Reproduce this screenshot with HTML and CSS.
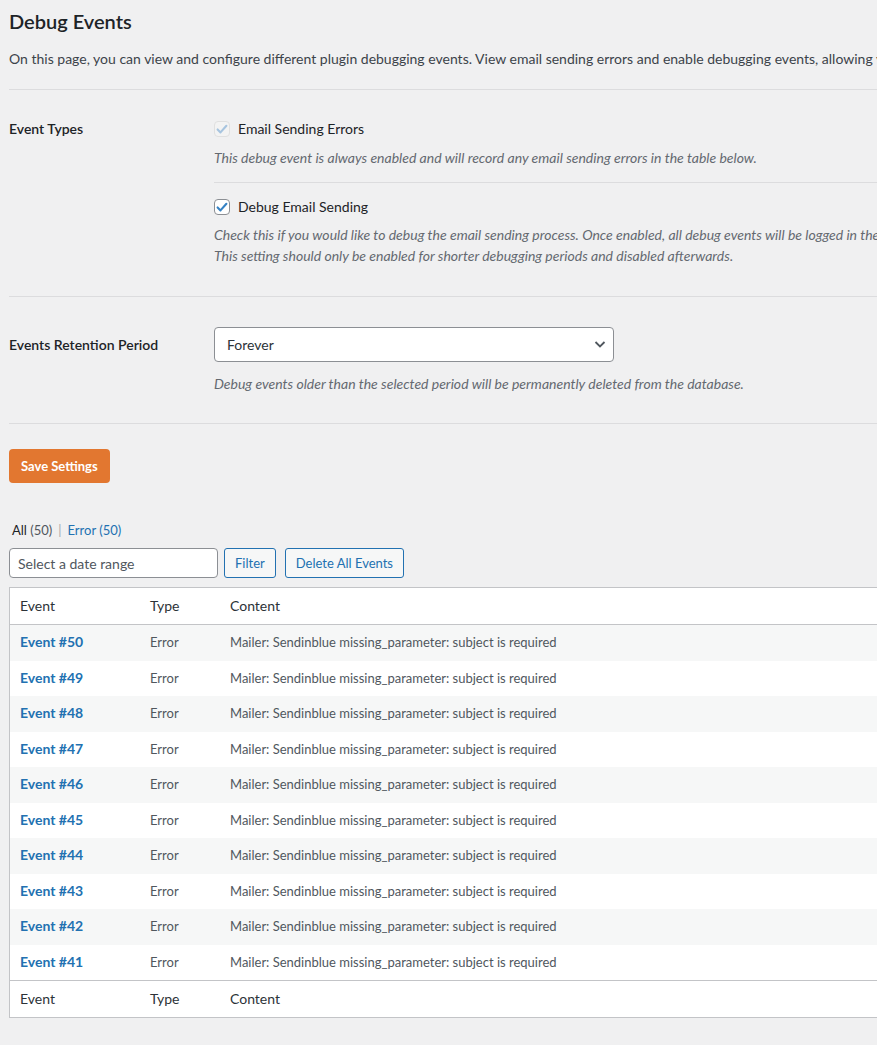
FILE: index.html
```html
<!DOCTYPE html>
<html lang="en">

<head>
    <meta charset="UTF-8">
    <meta name="viewport" content="width=device-width, initial-scale=1.0">
    <title>Debug Events</title>
    <link rel="stylesheet" href="styles.css">
</head>

<body>
    <div class="wrap">
        <h1 class="page-title">Debug Events</h1>
        <p class="intro">On this page, you can view and configure different plugin debugging events. View email sending errors and enable debugging events, allowing you to detect email sending issues.</p>

        <div class="settings">
            <div class="setting-row">
                <div class="setting-label">Event Types</div>
                <div class="setting-field">
                    <div class="option">
                        <label class="check-line">
                            <span class="checkbox disabled">
                                <svg viewBox="0 0 16 16" width="16" height="16"><path d="M3.6 8.4l2.9 3 5.9-6.6" fill="none" stroke="currentColor" stroke-width="2.1" stroke-linecap="round" stroke-linejoin="round"/></svg>
                            </span>
                            Email Sending Errors
                        </label>
                        <p class="desc">This debug event is always enabled and will record any email sending errors in the table below.</p>
                    </div>
                    <div class="option">
                        <label class="check-line">
                            <span class="checkbox">
                                <svg viewBox="0 0 16 16" width="16" height="16"><path d="M3.6 8.4l2.9 3 5.9-6.6" fill="none" stroke="currentColor" stroke-width="2.1" stroke-linecap="round" stroke-linejoin="round"/></svg>
                            </span>
                            Debug Email Sending
                        </label>
                        <p class="desc">Check this if you would like to debug the email sending process. Once enabled, all debug events will be logged in the table below.<br>This setting should only be enabled for shorter debugging periods and disabled afterwards.</p>
                    </div>
                </div>
            </div>

            <div class="setting-row">
                <div class="setting-label centered">Events Retention Period</div>
                <div class="setting-field">
                    <div class="select-box">
                        <select class="select">
                            <option>Forever</option>
                        </select>
                        <svg class="chevron" viewBox="0 0 16 16" width="16" height="16"><path d="M3.5 6l4.5 4.5 4.5-4.5" fill="none" stroke="#50575e" stroke-width="1.8"/></svg>
                    </div>
                    <p class="desc">Debug events older than the selected period will be permanently deleted from the database.</p>
                </div>
            </div>
        </div>

        <button class="btn-save">Save Settings</button>

        <ul class="views">
            <li class="current">All <span class="count">(50)</span></li>
            <li class="sep">|</li>
            <li><a href="#">Error <span>(50)</span></a></li>
        </ul>

        <div class="filters">
            <input class="date-input" type="text" placeholder="Select a date range">
            <button class="btn-outline">Filter</button>
            <button class="btn-outline delete">Delete All Events</button>
        </div>

        <table class="events">
            <thead>
                <tr><th class="col-event">Event</th><th class="col-type">Type</th><th>Content</th></tr>
            </thead>
            <tbody>
                <tr><td><a href="#">Event #50</a></td><td>Error</td><td>Mailer: Sendinblue missing_parameter: subject is required</td></tr>
                <tr><td><a href="#">Event #49</a></td><td>Error</td><td>Mailer: Sendinblue missing_parameter: subject is required</td></tr>
                <tr><td><a href="#">Event #48</a></td><td>Error</td><td>Mailer: Sendinblue missing_parameter: subject is required</td></tr>
                <tr><td><a href="#">Event #47</a></td><td>Error</td><td>Mailer: Sendinblue missing_parameter: subject is required</td></tr>
                <tr><td><a href="#">Event #46</a></td><td>Error</td><td>Mailer: Sendinblue missing_parameter: subject is required</td></tr>
                <tr><td><a href="#">Event #45</a></td><td>Error</td><td>Mailer: Sendinblue missing_parameter: subject is required</td></tr>
                <tr><td><a href="#">Event #44</a></td><td>Error</td><td>Mailer: Sendinblue missing_parameter: subject is required</td></tr>
                <tr><td><a href="#">Event #43</a></td><td>Error</td><td>Mailer: Sendinblue missing_parameter: subject is required</td></tr>
                <tr><td><a href="#">Event #42</a></td><td>Error</td><td>Mailer: Sendinblue missing_parameter: subject is required</td></tr>
                <tr><td><a href="#">Event #41</a></td><td>Error</td><td>Mailer: Sendinblue missing_parameter: subject is required</td></tr>
            </tbody>
            <tfoot>
                <tr><th>Event</th><th>Type</th><th>Content</th></tr>
            </tfoot>
        </table>
    </div>
</body>

</html>
```

FILE: styles.css
```css
html,
body {
    overflow: hidden;
}

body {
    margin: 0;
    background: #f0f0f1;
    color: #3c434a;
    font-family: Lato, "Noto Sans", sans-serif;
    font-size: 14px;
}

.wrap {
    width: 1200px;
    padding-left: 9px;
}

.page-title {
    margin: 8px 0 0;
    font-size: 20px;
    line-height: 26px;
    font-weight: 600;
    color: #1d2327;
}

.intro {
    margin: 14px 0 0;
    line-height: 21px;
    white-space: nowrap;
}

.settings {
    margin-top: 20px;
    border-bottom: 1px solid #dcdcde;
}

.setting-row {
    display: grid;
    grid-template-columns: 205px 1fr;
    border-top: 1px solid #dcdcde;
    padding: 29px 0 30px;
}

.setting-row + .setting-row {
    padding: 30px 0 29px;
}

.setting-label {
    font-weight: 600;
    color: #1d2327;
    line-height: 20px;
}

.setting-label.centered {
    line-height: 35px;
}

.option + .option {
    margin-top: 14px;
    padding-top: 14px;
    border-top: 1px solid #dcdcde;
}

.check-line {
    display: flex;
    align-items: center;
    gap: 8px;
    line-height: 20px;
    color: #1d2327;
}

.checkbox {
    width: 16px;
    height: 16px;
    box-sizing: border-box;
    border: 1px solid #8c8f94;
    border-radius: 4px;
    background: #fff;
    color: #3582c4;
    display: flex;
}

.checkbox svg {
    margin: -1px;
}

.checkbox.disabled {
    border-color: #e0e0e0;
    background: #f3f3f3;
    color: #a7c4df;
}

.desc {
    margin: 7.5px 0 0;
    line-height: 21px;
    font-style: italic;
    color: #646970;
    white-space: nowrap;
}

.select-box {
    position: relative;
    width: 400px;
}

.select {
    display: block;
    appearance: none;
    width: 100%;
    height: 35px;
    padding: 0 12px;
    border: 1px solid #8c8f94;
    border-radius: 4px;
    background: #fff;
    color: #2c3338;
    font: inherit;
}

.chevron {
    position: absolute;
    right: 6px;
    top: 9px;
}

.select-box + .desc {
    margin-top: 11px;
}

.btn-save {
    display: block;
    margin-top: 25px;
    height: 34px;
    padding: 0 12px;
    border: none;
    border-radius: 4px;
    background: #e27730;
    color: #fff;
    font: inherit;
    font-size: 13px;
    font-weight: 700;
}

.views {
    list-style: none;
    display: flex;
    gap: 6px;
    margin: 37px 0 0 3px;
    padding: 0;
    font-size: 13px;
    line-height: 20px;
    color: #50575e;
}

.views .current {
    color: #1d2327;
}

.views .count {
    color: #50575e;
}

.views .sep {
    color: #a7aaad;
}

.views a {
    color: #2271b1;
    text-decoration: none;
}

.filters {
    display: flex;
    align-items: center;
    height: 30px;
    margin-top: 8px;
}

.date-input {
    width: 209px;
    height: 30px;
    box-sizing: border-box;
    padding: 0 8px;
    border: 1px solid #8c8f94;
    border-radius: 4px;
    background: #fff;
    font: inherit;
}

.date-input::placeholder {
    color: #50575e;
}

.btn-outline {
    height: 30px;
    margin-left: 6px;
    padding: 0 10px;
    border: 1px solid #2271b1;
    border-radius: 3px;
    background: #f6f7f7;
    color: #2271b1;
    font: inherit;
    font-size: 13px;
}

.btn-outline.delete {
    margin-left: 9px;
}

.events {
    margin-top: 9px;
    width: 1100px;
    border-collapse: collapse;
    border: 1px solid #c3c4c7;
    background: #fff;
}

.events th {
    text-align: left;
    font-weight: 400;
    color: #2c3338;
    padding: 8px 10px;
    line-height: 20px;
}

.events thead th {
    border-bottom: 1px solid #c3c4c7;
}

.events tfoot th {
    border-top: 1px solid #c3c4c7;
}

.col-event {
    width: 110px;
}

.col-type {
    width: 60px;
}

.events td {
    padding: 8px 10px;
    line-height: 19.5px;
    font-size: 13px;
    color: #50575e;
}

.events tbody tr:nth-child(odd) {
    background: #f6f7f7;
}

.events td a {
    font-size: 14px;
    line-height: 14px;
    font-weight: 700;
    color: #2271b1;
    text-decoration: none;
}
```
